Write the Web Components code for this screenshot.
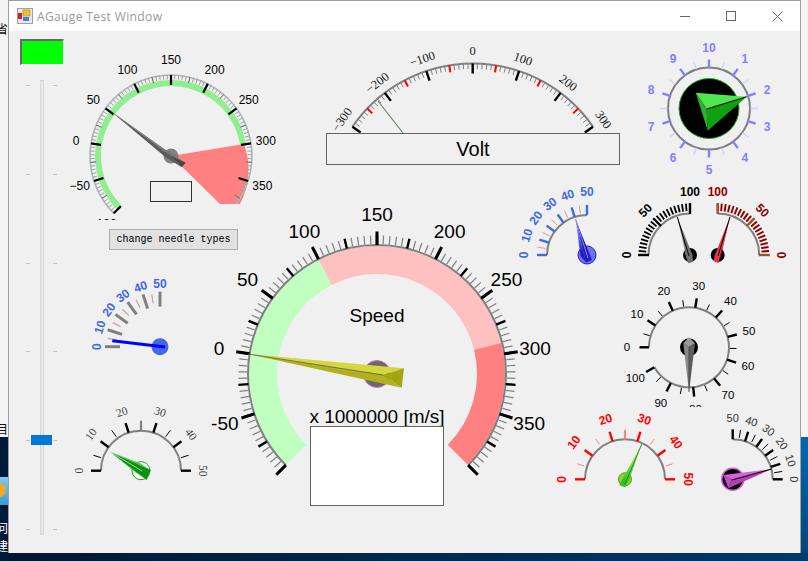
<!DOCTYPE html>
<html>
<head>
<meta charset="utf-8">
<title>AGauge Test Window</title>
<style>
  html, body { margin: 0; padding: 0; width: 808px; height: 561px; overflow: hidden; }
</style>
</head>
<body>
<desk-top>
  <app-window caption="AGauge Test Window">
    <led-box></led-box>
    <track-bar></track-bar>
    <a-gauge name="pressure"></a-gauge>
    <form-box x="150" y="181" w="42" h="21" fill="#f0f0f0" line="#333"></form-box>
    <win-button>change needle types</win-button>
    <a-gauge name="volt"></a-gauge>
    <form-box x="326" y="133" w="294" h="32" fill="#f0f0f0" line="#646464" size="20">Volt</form-box>
    <a-gauge name="knob"></a-gauge>
    <a-gauge name="blue"></a-gauge>
    <a-gauge name="fuelBlack"></a-gauge>
    <a-gauge name="fuelRed"></a-gauge>
    <a-gauge name="dial"></a-gauge>
    <a-gauge name="speed"></a-gauge>
    <form-box x="310" y="426" w="134" h="80" fill="#fff" line="#646464"></form-box>
    <a-gauge name="flat"></a-gauge>
    <a-gauge name="smallGreen"></a-gauge>
    <a-gauge name="red"></a-gauge>
    <a-gauge name="magenta"></a-gauge>
  </app-window>
</desk-top>

<script>
// form client area starts here in page coordinates
const FORM_X = 9, FORM_Y = 31;
const SANS = "'Liberation Sans', Arial, sans-serif";
const SERIF = "'Liberation Serif', 'Times New Roman', serif";

const rad = d => d * Math.PI / 180;

// little drawing helper bound to a gauge centre, angles are clockwise from 12 o'clock
function pen(cx, cy) {
    const at = (r, a) => [cx + r * Math.sin(rad(a)), cy - r * Math.cos(rad(a))];
    const fx = n => n.toFixed(2);
    return {
        ring(r, a0, a1, color, w) {
            const [x0, y0] = at(r, a0), [x1, y1] = at(r, a1);
            const large = a1 - a0 > 180 ? 1 : 0;
            return `<path d="M${fx(x0)} ${fx(y0)}A${r} ${r} 0 ${large} 1 ${fx(x1)} ${fx(y1)}" fill="none" stroke="${color}" stroke-width="${w}"/>`;
        },
        band(r0, r1, a0, a1, fill) {
            const a = at(r1, a0), b = at(r1, a1), c = at(r0, a1), d = at(r0, a0);
            const large = a1 - a0 > 180 ? 1 : 0;
            return `<path d="M${a}A${r1} ${r1} 0 ${large} 1 ${b}L${c}A${r0} ${r0} 0 ${large} 0 ${d}Z" fill="${fill}"/>`;
        },
        // n intervals between a0 and a1, "only" filters the tick index
        ticks(a0, a1, n, r0, r1, color, w, only) {
            let out = '';
            for (let i = 0; i <= n; i++) {
                if (only && !only(i)) continue;
                const a = a0 + (a1 - a0) * i / n;
                const p = at(r0, a), q = at(r1, a);
                out += `<line x1="${fx(p[0])}" y1="${fx(p[1])}" x2="${fx(q[0])}" y2="${fx(q[1])}" stroke="${color}" stroke-width="${w}"/>`;
            }
            return out;
        },
        labels(a0, a1, texts, r, o) {
            let out = '';
            const step = (a1 - a0) / (texts.length - 1);
            texts.forEach((t, i) => {
                const a = a0 + step * i;
                const [x, y] = at(r, a);
                const rot = o.rotate ? ` transform="rotate(${a} ${fx(x)} ${fx(y)})"` : '';
                out += `<text x="${fx(x)}" y="${fx(y)}"${rot} text-anchor="middle" dominant-baseline="central" font-family="${o.font || SANS}" font-size="${o.size}" font-weight="${o.weight || 400}" fill="${o.fill || '#000'}">${t}</text>`;
            });
            return out;
        },
        text(t, x, y, size) {
            return `<text x="${x}" y="${y}" text-anchor="middle" dominant-baseline="central" font-family="${SANS}" font-size="${size}" fill="#000">${t}</text>`;
        },
        disc(r, fill, line, w) {
            return `<circle cx="${cx}" cy="${cy}" r="${r}" fill="${fill}"${line ? ` stroke="${line}" stroke-width="${w || 1}"` : ''}/>`;
        },
        poly(pts, fill) { return `<polygon points="${pts}" fill="${fill}"/>`; },
        line(x1, y1, x2, y2, color, w) {
            return `<line x1="${x1}" y1="${y1}" x2="${x2}" y2="${y2}" stroke="${color}" stroke-width="${w}"/>`;
        }
    };
}

// the box is where the .NET control clips its drawing
const GAUGES = {
    pressure: {
        box: [70, 50, 215, 170], c: [171, 156],
        draw(g) {
            const clip = `<clipPath id="cut"><path d="M70 50H285V204H172V220H70Z"/></clipPath>`;
            return clip + g.band(70, 76, -135, 81, '#90ee90') +
                `<g clip-path="url(#cut)">` +
                `<path d="M171 156L244 144A74 74 0 0 1 240 204L220 204Z" fill="#ff8080"/>` +
                g.ring(81, -135, 135, '#b0b6bc', 1.6) +
                g.ticks(-135, 135, 100, 76.5, 81, '#a0a0a0', 1) +
                g.ticks(-135, 135, 20, 75, 81, '#707070', 1) +
                g.ticks(-135, 135, 10, 71, 81, '#000', 2.2) + `</g>` +
                g.labels(-135, 108, ['\u2212100', '\u221250', '0', '50', '100', '150', '200', '250', '300', '350'], 96, { size: 12 }) +
                g.disc(7.5, '#808080') +
                g.poly('108,109 163.3,148.3 185.7,162.7 171,156', '#757575') +
                g.poly('108,109 171,156 181.7,167.3 165,156.7', '#5c5c5c') +
                g.poly('171,156 185.7,162.7 181.7,167.3', '#484848');
        }
    },
    volt: {
        box: [330, 40, 286, 94], c: [472.7, 209.5],
        draw(g) {
            return g.ticks(-55.5, 55.5, 60, 140.5, 146, '#808080', 1) +
                g.ring(146, -55.5, 55.5, '#808080', 2) +
                g.ticks(-55.5, 55.5, 12, 139, 146, '#f00', 2, i => i % 2) +
                g.ticks(-55.5, 55.5, 6, 136, 146, '#000', 2.4) +
                g.labels(-55.5, 55.5, ['\u2212300', '\u2212200', '\u2212100', '0', '100', '200', '300'], 158.5, { size: 12.5, font: SERIF, rotate: true, fill: '#222' }) +
                g.line(378, 101, 403, 133, '#5a905a', 1.2);
        }
    },
    knob: {
        box: [640, 36, 140, 146], c: [709, 108.5],
        draw(g) {
            return g.disc(41, 'none', '#808080', 2) +
                g.disc(30, '#000', '#20a020', 1) +
                g.ticks(18, 378, 10, 41.5, 49, '#d4d4ff', 1.6, i => i < 10) +
                g.ticks(0, 360, 10, 40, 49, '#8080ff', 2.4, i => i < 10) +
                g.labels(0, 324, ['10', '1', '2', '3', '4', '5', '6', '7', '8', '9'], 61, { size: 12, weight: 700, fill: '#8080ff' }) +
                g.poly('746.7,96.7 695.7,92.7 706.7,109', '#50e650') +
                g.poly('746.7,96.7 706.7,109 707.7,130.7', '#10a010') +
                g.poly('695.7,92.7 706.7,109 707.7,130.7', '#30b030') +
                g.line(706.7, 109, 746.7, 96.7, '#000', 1);
        }
    },
    blue: {
        box: [515, 180, 90, 88], c: [587, 255],
        draw(g) {
            return `<linearGradient id="fade" gradientUnits="userSpaceOnUse" x1="575" y1="219" x2="588" y2="250"><stop offset="0" stop-color="#c8c8ff"/><stop offset="1" stop-color="#2020c0"/></linearGradient>` +
                g.ticks(-81, -9, 4, 42, 50, '#c8a0a0', 1) +
                g.ring(40, -90, 0, '#808080', 2) +
                g.ticks(-90, 0, 5, 40, 50, '#4169e1', 2.4) +
                g.labels(-90, 0, ['0', '10', '20', '30', '40', '50'], 63, { size: 12, weight: 700, fill: '#4169e1', rotate: true }) +
                g.disc(9, '#7070f0', '#2020d0', 1) +
                g.poly('575.5,219 586,262.5 580.5,256', 'url(#fade)') +
                g.poly('575.5,219 592,260 586,262.5', '#2020c0') +
                g.line(575.5, 219, 588, 258, '#8888f0', 1);
        }
    },
    fuelBlack: {
        box: [620, 180, 82, 84], c: [690, 255],
        draw(g) {
            return g.ring(41.5, -90, 0, '#808080', 2) +
                g.ticks(-90, 0, 20, 44, 51.5, '#000', 1.8) +
                g.ticks(-90, 0, 2, 41, 52, '#000', 2.4) +
                g.labels(-90, 0, ['0', '50', '100'], 63, { size: 12, weight: 700, rotate: true }) +
                g.disc(7, '#000') +
                g.poly('677.3,217 686,256.7 688.3,263.3', '#a8a8a8') +
                g.poly('677.3,217 692.5,255 693,262 688.3,263.3', '#707070') +
                g.line(677.3, 217, 689, 256, '#000', 1);
        }
    },
    fuelRed: {
        box: [708, 180, 82, 84], c: [717.7, 255],
        draw(g) {
            return g.ring(41.5, 0, 90, '#808080', 2) +
                g.ticks(0, 90, 20, 44, 51.5, '#8b0000', 1.9) +
                g.ticks(0, 90, 2, 41, 52, '#a0522d', 2.4) +
                g.labels(0, 90, ['100', '50', '0'], 63, { size: 12, weight: 700, fill: '#8b0000', rotate: true }) +
                g.disc(7, '#000') +
                g.poly('730,217 714.5,256 714,261 718.3,263.3', '#e03848') +
                g.poly('730,217 721,256 718.3,263.3', '#a81020') +
                g.line(730, 217, 718, 256, '#000', 1);
        }
    },
    dial: {
        box: [620, 276, 136, 131], c: [689, 347.3],
        draw(g) {
            return g.ticks(-90, 240, 20, 41, 47.5, '#000', 1) +
                g.ring(40, -90, 240, '#808080', 2) +
                g.ticks(-90, 240, 10, 40, 49.5, '#000', 2.4) +
                g.labels(-90, 240, ['0', '10', '20', '30', '40', '50', '60', '70', '80', '90', '100'], 62, { size: 11.5 }) +
                g.disc(9, '#000') +
                g.poly('683.3,343.3 689,337.3 695,343.3 689,347', '#9a9a9a') +
                g.poly('689,392 683.3,343.3 689,347', '#8a8a8a') +
                g.poly('689,392 695,343.3 689,347', '#5e5e5e') +
                g.line(689, 347, 689, 392, '#3c3c3c', 0.8);
        }
    },
    speed: {
        box: [205, 200, 350, 310], c: [377, 374],
        draw(g) {
            return g.band(100, 128, -135, -27, '#c0ffc0') +
                g.band(100, 128, -27, 76, '#ffc0c0') +
                g.band(100, 128, 76, 135, '#ff8080') +
                g.ticks(-135, 135, 100, 130, 138.5, '#808080', 1.2) +
                g.ring(129, -135, 135, '#808080', 2) +
                g.ticks(-135, 135, 20, 129, 139, '#000', 2.4) +
                g.ticks(-135, 135, 10, 129, 142.5, '#000', 3) +
                g.labels(-108, 108, ['-50', '0', '50', '100', '150', '200', '250', '300', '350'], 160, { size: 19 }) +
                g.text('Speed', 377, 315, 19) +
                g.text('x 1000000 [m/s]', 377, 416, 19) +
                g.disc(13.5, '#696969', '#d070d8', 1) +
                g.poly('248,354 404,368.3 383.3,375', '#d6d63e') +
                g.poly('248,354 383.3,375 401.7,387.7', '#b0b020') +
                g.poly('404,368.3 401.7,387.7 383.3,375', '#a4a410') +
                g.line(248, 354, 383.3, 375, '#6a6a50', 0.9);
        }
    },
    flat: {
        box: [90, 275, 85, 85], c: [160, 346.7],
        draw(g) {
            return g.ticks(-81, -9, 4, 44, 53, '#c8a0a0', 1.2) +
                g.ticks(-90, 0, 5, 40, 55, '#808080', 3) +
                g.labels(-90, 0, ['0', '10', '20', '30', '40', '50'], 63, { size: 12, weight: 700, fill: '#4169e1', rotate: true }) +
                g.disc(8.5, '#4169e1') +
                g.line(112.3, 340.7, 165, 346.9, '#0000ff', 3);
        }
    },
    smallGreen: {
        box: [72, 405, 140, 80], c: [141, 470.7],
        draw(g) {
            return g.ring(40, -90, 90, '#808080', 2) +
                g.ticks(-72, 72, 4, 42, 50, '#000', 1) +
                g.ticks(-90, 90, 5, 40, 50, '#000', 2.4) +
                g.ticks(0, 0, 1, 40, 48, '#808080', 2.2, i => i === 0) +
                g.labels(-90, 90, ['0', '10', '20', '30', '40', '50'], 62, { size: 11.5, font: SERIF, fill: '#444', rotate: true }) +
                g.disc(9, '#fff', '#20a020', 1) +
                g.poly('110,451.7 140,463.3 150.7,470', '#40d040') +
                g.poly('110,451.7 150.7,470 146.7,480', '#109010') +
                g.poly('110,451.7 135,472 146.7,480', '#20b020') +
                g.line(110, 451.7, 142, 471, '#c8f8c8', 0.7);
        }
    },
    red: {
        box: [552, 410, 146, 78], c: [625, 479.3],
        draw(g) {
            return `<linearGradient id="lime" gradientUnits="userSpaceOnUse" x1="642" y1="444" x2="626" y2="482"><stop offset="0" stop-color="#d0ff70"/><stop offset="1" stop-color="#30c020"/></linearGradient>` +
                g.ring(40, -90, 90, '#808080', 2) +
                g.ticks(-72, 72, 4, 43, 50, '#ff8080', 1) +
                g.ticks(0, 0, 1, 40, 49, '#ff8080', 2.2, i => i === 0) +
                g.ticks(-90, 90, 5, 40, 50, '#ff0000', 2.4) +
                g.labels(-90, 90, ['0', '10', '20', '30', '40', '50'], 63, { size: 12, weight: 700, fill: '#f00', rotate: true }) +
                g.disc(6.5, '#90d030', '#50a010', 1) +
                g.poly('641.7,444 619.3,485 625,487.3', 'url(#lime)') +
                g.poly('641.7,444 629,480 625,487.3', '#38c020') +
                g.line(641.7, 444, 625, 484, '#108010', 0.8);
        }
    },
    magenta: {
        box: [718, 410, 84, 84], c: [732.7, 479.3],
        draw(g) {
            return g.ticks(9, 81, 4, 42, 50, '#000', 1) +
                g.ring(40, 0, 90, '#808080', 2) +
                g.ticks(0, 90, 5, 40, 50, '#000', 2.4) +
                g.labels(0, 90, ['50', '40', '30', '20', '10', '0'], 61, { size: 11, fill: '#333', rotate: true }) +
                g.disc(11, '#000', '#d060d0', 1.5) +
                g.poly('771.7,469 723.3,475 731.7,480', '#d860d8') +
                g.poly('771.7,469 731.7,480 728.3,488.3', '#b040b0') +
                g.poly('723.3,475 728.3,488.3 731.7,480', '#c050c8') +
                g.line(731.7, 480, 771.7, 469, '#000', 1);
        }
    }
};

class AGauge extends HTMLElement {
    connectedCallback() {
        const cfg = GAUGES[this.getAttribute('name')];
        const [x, y, w, h] = cfg.box;
        const root = this.attachShadow({ mode: 'open' });
        root.innerHTML = `<style>
            :host { position: absolute; display: block; left: ${x - FORM_X}px; top: ${y - FORM_Y}px; width: ${w}px; height: ${h}px; }
            svg { display: block; width: 100%; height: 100%; overflow: hidden; }
        </style>
        <svg viewBox="${x} ${y} ${w} ${h}" xmlns="http://www.w3.org/2000/svg">${cfg.draw(pen(cfg.c[0], cfg.c[1]))}</svg>`;
    }
}

class FormBox extends HTMLElement {
    connectedCallback() {
        const a = n => this.getAttribute(n);
        const root = this.attachShadow({ mode: 'open' });
        root.innerHTML = `<style>
            :host { position: absolute; left: ${a('x') - FORM_X}px; top: ${a('y') - FORM_Y}px; width: ${a('w')}px; height: ${a('h')}px;
                box-sizing: border-box; display: flex; align-items: center; justify-content: center;
                background: ${a('fill')}; border: 1px solid ${a('line')}; color: #000;
                font: ${a('size') || 12}px ${SANS}; }
        </style><slot></slot>`;
    }
}

class WinButton extends HTMLElement {
    constructor() {
        super();
        this.attachShadow({ mode: 'open' }).innerHTML = `<style>
            :host { position: absolute; left: ${109 - FORM_X}px; top: ${229 - FORM_Y}px; width: 129px; height: 21px;
                box-sizing: border-box; display: flex; align-items: center; justify-content: center;
                background: #e1e1e1; border: 1px solid #adadad; color: #000;
                font: 10px 'Liberation Mono', monospace; }
        </style><slot></slot>`;
    }
}

class LedBox extends HTMLElement {
    constructor() {
        super();
        this.attachShadow({ mode: 'open' }).innerHTML = `<style>
            :host { position: absolute; left: ${20 - FORM_X}px; top: ${39 - FORM_Y}px; width: 44px; height: 26px; box-sizing: border-box;
                background: #00ff00; border: 1px solid; border-width: 2px 1px 1px 2px; border-color: #696969 #fff #fff #696969; }
        </style>`;
    }
}

class TrackBar extends HTMLElement {
    constructor() {
        super();
        const marks = '<i></i>'.repeat(6);
        this.attachShadow({ mode: 'open' }).innerHTML = `<style>
            :host { position: absolute; left: ${26 - FORM_X}px; top: ${80 - FORM_Y}px; width: 31px; height: 455px;
                display: grid; grid-template-columns: 4px 1fr 4px; }
            .marks { display: flex; flex-direction: column; justify-content: space-between; padding: 5px 0; }
            .marks i { display: block; height: 1px; background: #c4c4c4; }
            .rail { justify-self: center; width: 4px; box-sizing: border-box; background: #e7eaea; border: 1px solid #d6d6d6; position: relative; }
            .thumb { position: absolute; left: -10px; top: 354px; width: 21px; height: 10px; background: #0078d7; }
        </style>
        <div class="marks">${marks}</div>
        <div class="rail"><div class="thumb"></div></div>
        <div class="marks">${marks}</div>`;
    }
}

class AppWindow extends HTMLElement {
    constructor() {
        super();
        this.attachShadow({ mode: 'open' }).innerHTML = `<style>
            :host { position: absolute; left: 8px; top: 0; width: 793px; height: 553px; box-sizing: border-box;
                display: flex; flex-direction: column; background: #f0f0f0;
                border: 1px solid #a0a0a0; border-width: 1px 1px 0 1px; }
            header { flex: 0 0 30px; background: #fff; display: flex; align-items: center; padding-left: 8px; }
            header svg { flex: none; display: block; }
            .title { flex: 1; margin-left: 4px; font: 12px 'Open Sans', sans-serif; color: #999; letter-spacing: .38px; }
            .btn { flex: 0 0 46px; height: 30px; display: flex; align-items: center; justify-content: center; }
        main { flex: 1; position: relative; }
        </style>
        <header>
            <svg width="16" height="16" viewBox="0 0 16 16">
                <rect x=".5" y=".5" width="15" height="15" fill="#e8e8e8" stroke="#a0a0a0"/>
                <rect x="1" y="5" width="4" height="6" fill="#d02020"/>
                <rect x="6" y="2" width="7" height="6" fill="#f0c030" stroke="#b08010" stroke-width=".6"/>
                <rect x="6" y="9" width="6" height="4" fill="#4080e0"/>
            </svg>
            <div class="title">${this.getAttribute('caption')}</div>
            <div class="btn"><svg width="10" height="10" viewBox="0 0 10 10"><path d="M0 5.5H10" stroke="#666"/></svg></div>
            <div class="btn"><svg width="10" height="10" viewBox="0 0 10 10"><rect x=".5" y=".5" width="9" height="9" fill="none" stroke="#666"/></svg></div>
            <div class="btn"><svg width="11" height="11" viewBox="0 0 11 11"><path d="M.5 .5L10.5 10.5M10.5 .5L.5 10.5" stroke="#666" fill="none"/></svg></div>
        </header>
        <main><slot></slot></main>`;
    }
}

class DeskTop extends HTMLElement {
    constructor() {
        super();
        this.attachShadow({ mode: 'open' }).innerHTML = `<style>
            :host { display: grid; grid-template-rows: 437px 116px 8px; width: 808px; height: 561px; position: relative; overflow: hidden; font: 12px 'Noto Sans CJK SC', sans-serif; }
            .back { background: #f4f4f4; }
            .wall { background: linear-gradient(180deg, #0068b4, #00467f); }
            .foot { background: linear-gradient(90deg, #02162f, #003a6c); }
            .left { position: absolute; left: 0; width: 8px; overflow: hidden; color: #111; white-space: nowrap; direction: rtl; }
            .navy { position: absolute; left: 0; top: 437px; width: 8px; height: 124px; background: #021a3a; }
            .ico { position: absolute; left: -8px; top: 477px; width: 16px; height: 28px; background: linear-gradient(#7ecbee, #3b9ad0); }
            .sun { position: absolute; left: -8px; top: 483px; width: 14px; height: 14px; border-radius: 50%; background: #f0a828; }
            .w { color: #fff; }
        </style>
        <div class="back"></div><div class="wall"></div><div class="foot"></div>
        <div class="navy"></div>
        <div class="ico"></div><div class="sun"></div>
        <div class="left" style="top:20px">省</div>
        <div class="left" style="top:420px">目</div>
        <div class="left w" style="top:519px">问</div>
        <div class="left w" style="top:537px">建</div>
        <slot></slot>`;
    }
}

customElements.define('a-gauge', AGauge);
customElements.define('form-box', FormBox);
customElements.define('win-button', WinButton);
customElements.define('led-box', LedBox);
customElements.define('track-bar', TrackBar);
customElements.define('app-window', AppWindow);
customElements.define('desk-top', DeskTop);
</script>
</body>
</html>
